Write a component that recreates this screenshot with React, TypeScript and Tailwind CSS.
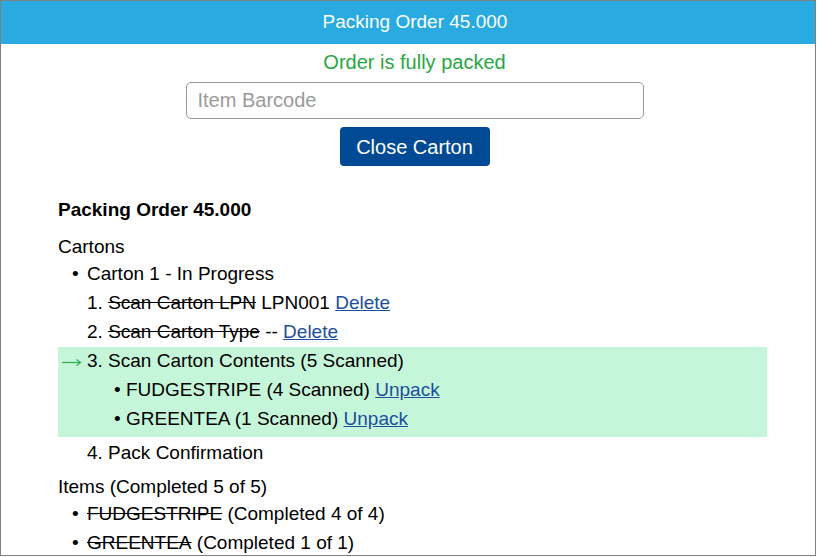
import React from 'react';

const Line = ({ children, className = '' }: { children: React.ReactNode; className?: string }) => (
  <div className={`h-[29px] flex items-center whitespace-nowrap ${className}`}>{children}</div>
);

const Link = ({ children }: { children: React.ReactNode }) => (
  <a href="#" className="text-[#1c4f9c] underline">{children}</a>
);

const Arrow = () => (
  <svg width="22" height="10" viewBox="0 0 22 10" className="mr-[4px] text-[#2fae57]">
    <path d="M1 5.5H19" stroke="currentColor" strokeWidth="1.2" fill="none" />
    <path d="M15.5 2.5L19.5 5.5L15.5 8.5" stroke="currentColor" strokeWidth="1.2" fill="none" />
  </svg>
);

const App = () => {
  return (
    <div className="w-[816px] h-[556px] border border-[#808080] bg-white overflow-hidden text-[19px] text-black" style={{ fontFamily: '"Liberation Sans", Arial, sans-serif' }}>
      <div className="h-[43px] bg-[#29abe2] text-white flex items-center justify-center pl-[14px]">
        Packing Order 45.000
      </div>

      <div className="flex flex-col items-center pl-[13px] text-[20px]">
        <p className="mt-[7px] h-[23px] leading-[23px] text-[#28a745]">Order is fully packed</p>
        <input
          type="text"
          placeholder="Item Barcode"
          className="mt-[8px] w-[458px] h-[37px] px-[11px] border border-[#9a9a9a] rounded-[5px] placeholder:text-[#9a9a9a] outline-none"
        />
        <button className="mt-[8px] w-[150px] h-[39px] bg-[#004a95] text-white rounded-[4px]">
          Close Carton
        </button>
      </div>

      <div className="ml-[57px] w-[709px] mt-[30px]">
        <Line className="font-bold">Packing Order 45.000</Line>
        <Line className="mt-[8px]">Cartons</Line>
        <Line className="-mt-[2px] pl-[14px]">
          <span className="w-[15px]">•</span>Carton 1 - In Progress
        </Line>
        <Line className="pl-[29px]">
          1.&nbsp;<span className="line-through">Scan Carton LPN</span>&nbsp;LPN001&nbsp;<Link>Delete</Link>
        </Line>
        <Line className="pl-[29px]">
          2.&nbsp;<span className="line-through">Scan Carton Type</span>&nbsp;--&nbsp;<Link>Delete</Link>
        </Line>
        <div className="bg-[#c6f6d9] pb-[3px]">
          <Line className="pl-[3px]">
            <Arrow />3. Scan Carton Contents (5 Scanned)
          </Line>
          <Line className="pl-[56px]">
            <span className="w-[12px]">•</span>FUDGESTRIPE (4 Scanned)&nbsp;<Link>Unpack</Link>
          </Line>
          <Line className="pl-[56px]">
            <span className="w-[12px]">•</span>GREENTEA (1 Scanned)&nbsp;<Link>Unpack</Link>
          </Line>
        </div>
        <Line className="pl-[29px] mt-[2px]">4. Pack Confirmation</Line>
        <Line className="mt-[5px]">Items (Completed 5 of 5)</Line>
        <Line className="-mt-[2px] pl-[14px]">
          <span className="w-[15px]">•</span><span className="line-through">FUDGESTRIPE</span>&nbsp;(Completed 4 of 4)
        </Line>
        <Line className="pl-[14px]">
          <span className="w-[15px]">•</span><span className="line-through">GREENTEA</span>&nbsp;(Completed 1 of 1)
        </Line>
      </div>
    </div>
  );
};

export default App;
